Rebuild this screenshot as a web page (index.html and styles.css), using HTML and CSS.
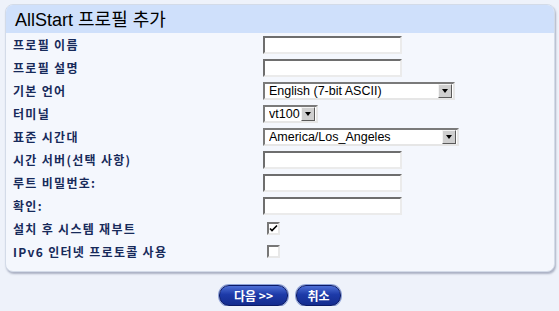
FILE: index.html
```html
<!DOCTYPE html>
<html>
<head>
    <title>AllStart 프로필 추가</title>
    <link rel="stylesheet" href="styles.css">
</head>
<body>
    <div class="panel">
        <div class="panel-head">AllStart 프로필 추가</div>
        <div class="form">
            <div class="label">프로필 이름</div>
            <div class="field"><input class="text" type="text"></div>

            <div class="label">프로필 설명</div>
            <div class="field"><input class="text" type="text"></div>

            <div class="label">기본 언어</div>
            <div class="field">
                <span class="select wide-lang">
                    <select><option>English (7-bit ASCII)</option></select>
                </span>
            </div>

            <div class="label">터미널</div>
            <div class="field">
                <span class="select narrow">
                    <select><option>vt100</option></select>
                </span>
            </div>

            <div class="label">표준 시간대</div>
            <div class="field">
                <span class="select wide-tz">
                    <select><option>America/Los_Angeles</option></select>
                </span>
            </div>

            <div class="label">시간 서버(선택 사항)</div>
            <div class="field"><input class="text" type="text"></div>

            <div class="label">루트 비밀번호:</div>
            <div class="field"><input class="text" type="password"></div>

            <div class="label">확인:</div>
            <div class="field"><input class="text" type="password"></div>

            <div class="label">설치 후 시스템 재부트</div>
            <div class="field">
                <span class="check">
                    <svg width="9" height="9" viewBox="0 0 9 9"><path d="M1 4.5 L3 6.5 L8 1.5" fill="none" stroke="#000" stroke-width="1.6"/></svg>
                </span>
            </div>

            <div class="label">IPv6 인터넷 프로토콜 사용</div>
            <div class="field"><span class="check"></span></div>
        </div>
    </div>

    <div class="buttons">
        <button class="btn">다음 &gt;&gt;</button>
        <button class="btn">취소</button>
    </div>
</body>
</html>
```

FILE: styles.css
```css
body {
    margin: 0;
    padding: 4px 4px 0 5px;
    background: #eef2fa;
    font-family: "Liberation Sans", "Noto Sans CJK KR", sans-serif;
}
.panel {
    width: 548px;
    background: #f4f7fd;
    border: 1px solid #d3dbe8;
    border-radius: 8px;
    box-shadow: 1px 2px 2px rgba(90, 100, 130, 0.45);
    overflow: hidden;
}
.panel-head {
    height: 28px;
    line-height: 30px;
    padding-left: 9px;
    background: #cfe0fb;
    color: #000;
    font-size: 18px;
}
.form {
    display: grid;
    grid-template-columns: 250px 1fr;
    grid-auto-rows: 23px;
    padding: 0 0 8px 7px;
}
.label {
    display: flex;
    align-items: center;
    color: #172a5a;
    font-family: "Noto Sans CJK KR", "Liberation Sans", sans-serif;
    font-weight: bold;
    font-size: 12px;
    letter-spacing: 1.3px;
}
.field {
    display: flex;
    align-items: center;
}
.text {
    box-sizing: border-box;
    width: 139px;
    height: 18px;
    margin: 0;
    padding: 0 3px;
    background: #fff;
    border: 2px solid;
    border-color: #6e6e6e #ebebeb #ebebeb #6e6e6e;
}
.select {
    position: relative;
    display: inline-block;
    box-sizing: border-box;
    height: 18px;
    background: #fff;
    border: 2px solid;
    border-color: #7a7a7a #e6e6e6 #e6e6e6 #7a7a7a;
}
.select select {
    appearance: none;
    -webkit-appearance: none;
    display: block;
    box-sizing: border-box;
    width: 100%;
    height: 14px;
    margin: 0;
    padding: 0 16px 0 4px;
    border: none;
    background: transparent;
    font-family: "Liberation Sans", sans-serif;
    font-size: 12.5px;
    line-height: 14px;
    color: #000;
}
.select::after {
    content: "";
    position: absolute;
    top: 0;
    right: 1px;
    width: 14px;
    height: 14px;
    box-sizing: border-box;
    border: 1px solid;
    border-color: #f4f4f4 #5a5a5a #5a5a5a #f4f4f4;
    background: #cfcfcf;
}
.select::before {
    content: "";
    position: absolute;
    z-index: 1;
    top: 5px;
    right: 5px;
    border-left: 3px solid transparent;
    border-right: 3px solid transparent;
    border-top: 4px solid #000;
}
.wide-lang { width: 192px; }
.narrow { width: 55px; }
.wide-tz { width: 196px; }
.check {
    box-sizing: border-box;
    display: flex;
    align-items: center;
    justify-content: center;
    width: 13px;
    height: 13px;
    margin-left: 4px;
    background: #fff;
    border: 2px solid;
    border-color: #777 #e8e8e8 #e8e8e8 #777;
}
.buttons {
    display: flex;
    justify-content: center;
    gap: 8px;
    margin-top: 13px;
}
.btn {
    height: 21px;
    padding: 0 12px;
    border: 1px solid #0b1a66;
    border-radius: 10px;
    background: linear-gradient(#4d6fd6, #1d3aa8 45%, #142c8e);
    color: #fff;
    font-family: "Noto Sans CJK KR", "Liberation Sans", sans-serif;
    font-weight: bold;
    font-size: 12px;
    line-height: 18px;
    box-shadow: 0 0 0 1px #8ea2d8;
}
.btn:first-child { width: 69px; }
.btn:last-child { width: 45px; padding: 0; }
```
